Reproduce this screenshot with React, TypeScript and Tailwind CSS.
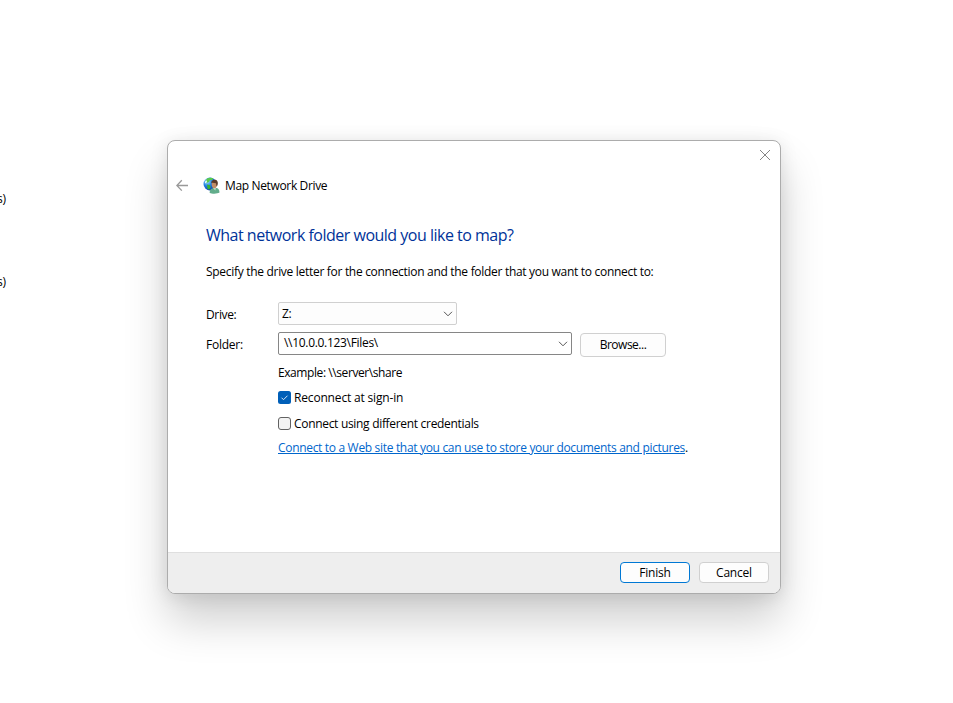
import React from 'react';

function Chevron() {
  return (
    <svg width="10" height="6" viewBox="0 0 10 6" fill="none" stroke="#555" strokeWidth="1">
      <path d="M1 0.8 L5 4.8 L9 0.8" />
    </svg>
  );
}

function GlobeUser() {
  return (
    <svg width="18" height="18" viewBox="0 0 18 18">
      <defs>
        <radialGradient id="globe" cx="0.3" cy="0.3" r="0.8">
          <stop offset="0" stopColor="#a8e4ff" />
          <stop offset="0.45" stopColor="#1f7fe0" />
          <stop offset="1" stopColor="#0a2f9c" />
        </radialGradient>
      </defs>
      <circle cx="7" cy="7" r="6.5" fill="url(#globe)" />
      <path d="M4 1.6C6 .4 9 .4 10.5 1.6L9 3.2 7 3 6 5 3.6 6 2 5Z" fill="#59c94c" />
      <path d="M4 7.4L7 8.2 7.6 10.5 6 12.8 4.5 11.2Z" fill="#35b52f" />
      <path d="M2 4.5L3.8 3.2 4 5.2 2 6.4Z" fill="#d9fbff" />
      <path d="M6.6 15.8C6.6 12.5 8.4 11.3 10.5 11L14 11C15.8 11.6 16.4 13.4 16.5 15.6 14.5 17 9 17.2 6.6 15.8Z" fill="#62ad8b" />
      <path d="M9.6 10.6L13 10.6 12.3 13.4Z" fill="#c9ddd0" />
      <ellipse cx="11.3" cy="7.5" rx="2.6" ry="3.7" fill="#c18d68" />
      <path d="M8.2 6.2C7.8 2.6 13 1.6 14.4 4.2 15.4 6 14.7 8.8 13.5 9.6L13 6.3C11.4 6.4 9.4 5 8.2 6.2Z" fill="#5b3a2a" />
    </svg>
  );
}

export default function App() {
  return (
    <div className="flex h-[703px] w-[953px] overflow-hidden bg-white font-['Open_Sans','Noto_Sans',sans-serif] text-[12px] leading-4 tracking-[-0.31px] text-black">
      <aside className="w-[167px] shrink-0 pt-[191px]">
        <div className="-ml-[3px] h-[83px]">s)</div>
        <div className="-ml-[3px]">s)</div>
      </aside>
      <main className="mt-[140px] flex h-[454px] w-[614px] shrink-0 flex-col overflow-hidden rounded-[8px] border border-[#acacac] bg-white shadow-[0_27px_44px_rgba(0,0,0,0.19),0_2px_18px_rgba(0,0,0,0.10)]">
        <header className="flex h-[31px] justify-end pt-[8px] pr-[9px]">
          <svg width="12" height="12" viewBox="0 0 12 12" stroke="#858585" fill="none">
            <path d="M1 1L11 11M11 1L1 11" />
          </svg>
        </header>
        <div className="flex h-[28px] items-center pl-[8px]">
          <svg className="-mt-[2px]" width="12" height="12" viewBox="0 0 12 12" stroke="#999" strokeWidth="1.3" fill="none">
            <path d="M12 6.5H1M5.8 1.2L0.8 6.5L5.8 11.6" />
          </svg>
          <span className="-mt-px ml-[15px]"><GlobeUser /></span>
          <span className="ml-[4px] tracking-[-0.35px]">Map Network Drive</span>
        </div>
        <section className="flex flex-1 flex-col pl-[38px]">
          <h1 className="mt-[23px] h-[24px] text-[16px] leading-6 tracking-[-0.5px] text-[#003399]">What network folder would you like to map?</h1>
          <p className="mt-[17px] tracking-[-0.3px]">Specify the drive letter for the connection and the folder that you want to connect to:</p>
          <div className="mt-[22px] flex h-[23px]">
            <span className="w-[72px] pt-[5px] tracking-[-0.35px]">Drive:</span>
            <div className="flex w-[179px] items-center justify-between rounded-[2px] border border-[#d0d0d0] bg-[#fdfdfd] pr-[3px] pl-[3px]">
              <span>Z:</span>
              <Chevron />
            </div>
          </div>
          <div className="mt-[7px] flex h-[25px]">
            <span className="w-[72px] pt-[5px] tracking-[-0.25px]">Folder:</span>
            <div className="flex h-[23px] w-[294px] items-center justify-between rounded-[2px] border border-[#868686] bg-white pr-[3px] pl-[5px]">
              <span className="-mt-px">{'\\\\10.0.0.123\\Files\\'}</span>
              <Chevron />
            </div>
            <button className="mt-px ml-[8px] h-[24px] w-[86px] rounded-[4px] border border-[#d0d0d0] bg-[#fdfdfd] tracking-[-0.5px]">Browse...</button>
          </div>
          <div className="flex flex-col pl-[72px]">
            <span className="mt-[8px] tracking-[-0.42px]">{'Example: \\\\server\\share'}</span>
            <label className="mt-[9px] flex items-center gap-[3px]">
              <svg className="-mt-px" width="13" height="13" viewBox="0 0 13 13" fill="none">
                <rect width="13" height="13" rx="2.5" fill="#005fb8" />
                <path d="M3.5 6.7L5.5 8.7L9.5 4.7" stroke="#d9e8f5" />
              </svg>
              <span className="tracking-[-0.17px]">Reconnect at sign-in</span>
            </label>
            <label className="mt-[10px] flex items-center gap-[3px]">
              <span className="-mt-px size-[13px] rounded-[3px] border border-[#626262] bg-[#f3f3f3]" />
              <span>Connect using different credentials</span>
            </label>
            <span className="mt-[8px] tracking-[-0.32px]"><a className="text-[#0066cc] underline">Connect to a Web site that you can use to store your documents and pictures</a>.</span>
          </div>
        </section>
        <footer className="flex h-[41px] justify-end gap-[9px] border-t border-[#dfdfdf] bg-[#eeeeee] pt-[9px] pr-[11px]">
          <button className="h-[21px] w-[70px] rounded-[4px] border border-[#0078d4] bg-[#fdfdfd] tracking-[-0.2px]">Finish</button>
          <button className="h-[21px] w-[70px] rounded-[4px] border border-[#d0d0d0] bg-[#fdfdfd] tracking-[-0.2px]">Cancel</button>
        </footer>
      </main>
    </div>
  );
}
